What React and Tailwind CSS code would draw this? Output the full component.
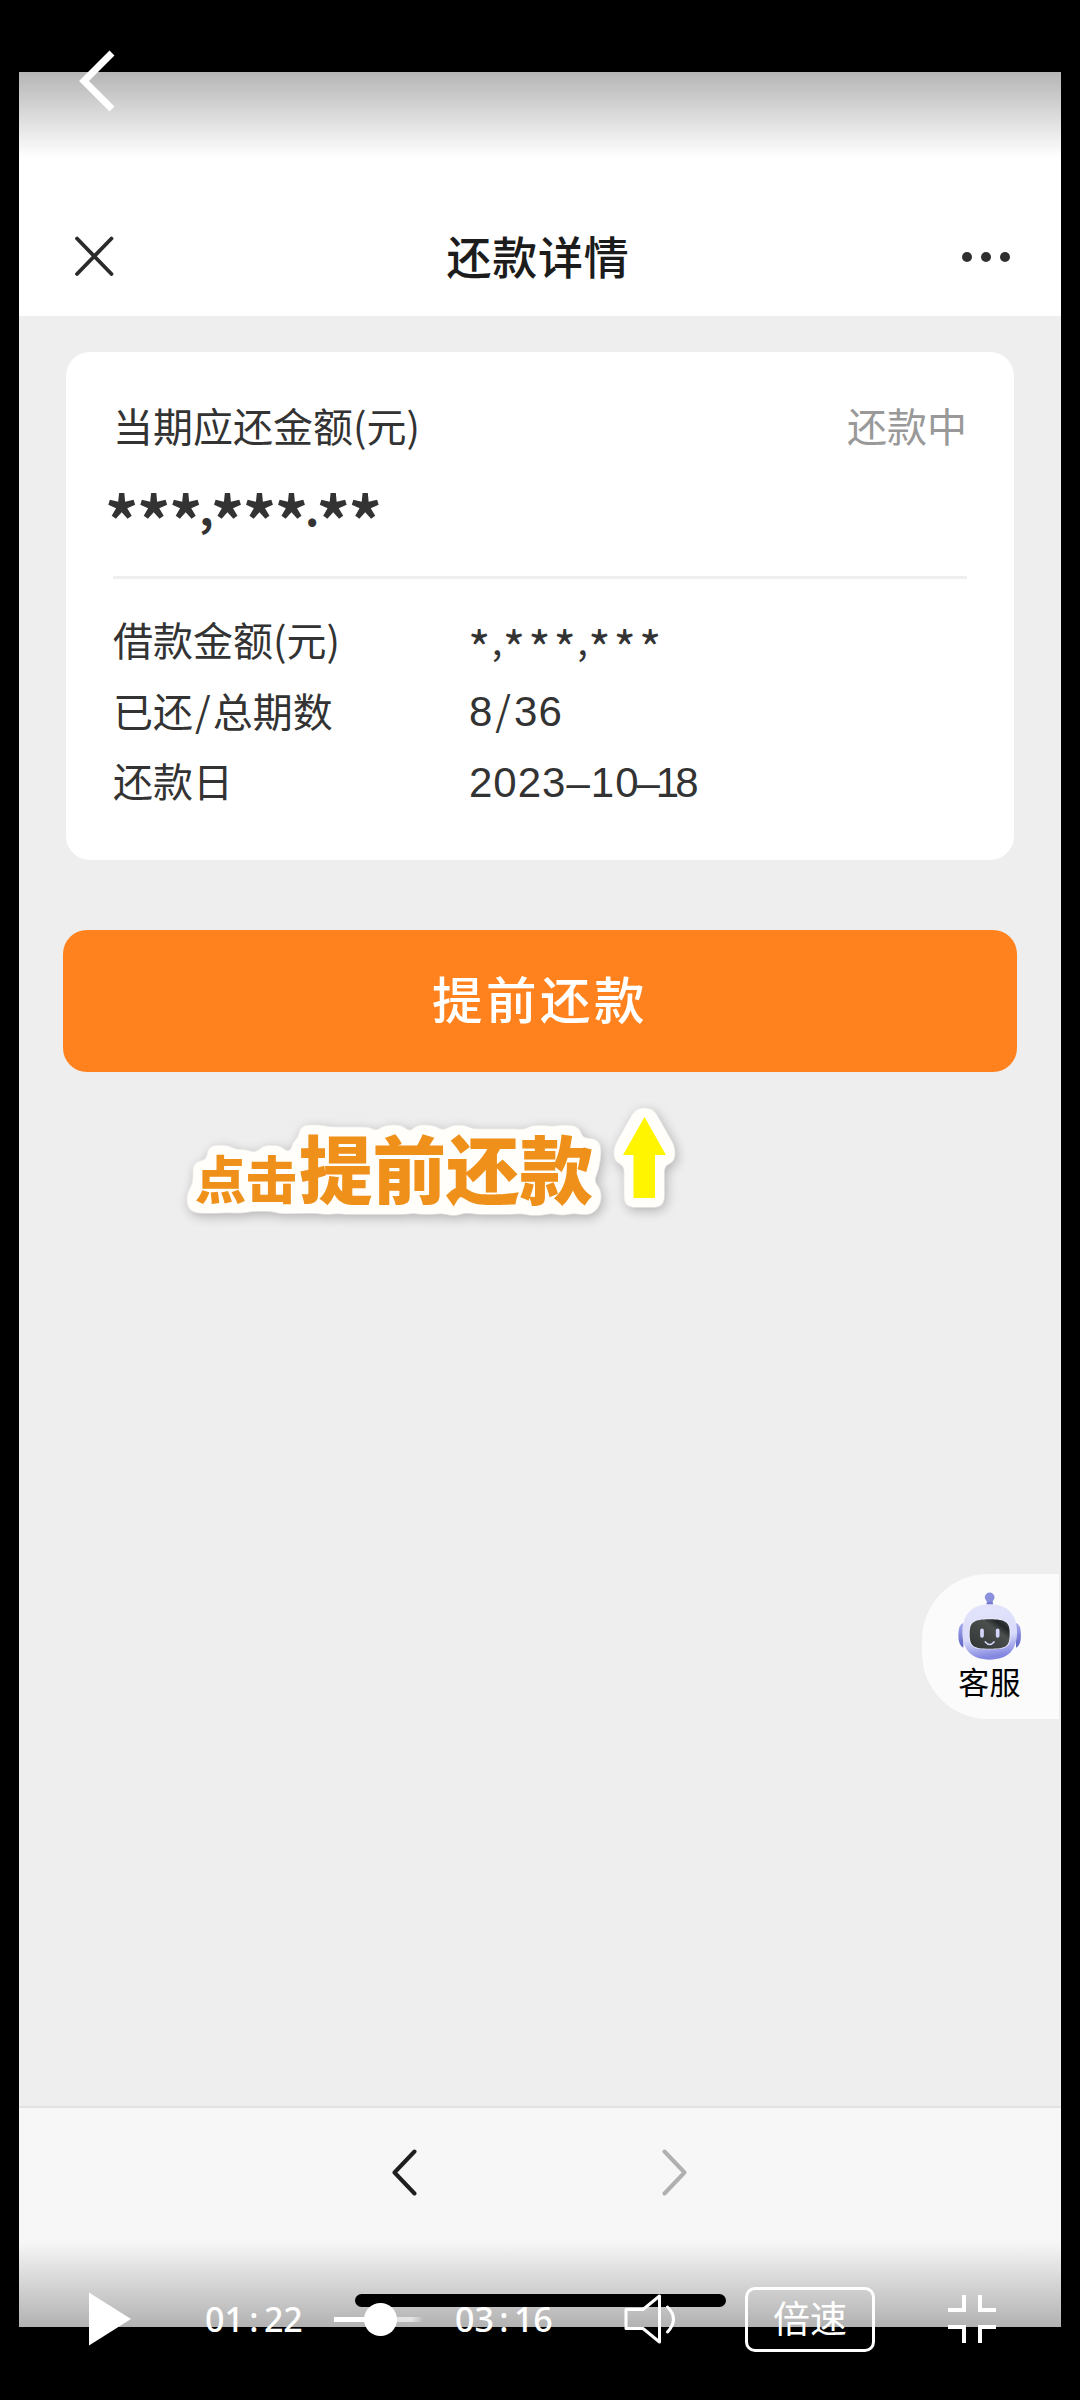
import React from 'react';

const maskStyles = {
  lg: {
    wrap: 'flex h-[66px] items-start -ml-[8px] font-bold',
    star: 'mt-[13px] text-[66px] leading-[66px] tracking-[-1.4px]',
    mark: 'w-[9.5px] -indent-[2px] text-[44px] leading-[72px]',
  },
  sm: {
    wrap: 'flex h-[70px] items-start -ml-[1px]',
    star: 'mt-[7px] text-[48px] leading-[70px] tracking-[2.9px]',
    mark: 'w-[9.5px] -indent-[1.5px] text-[38px] leading-[70px]',
  },
};

function Masked({ groups, size }) {
  const s = maskStyles[size];
  return (
    <div className={s.wrap}>
      {groups.map((g, i) => (
        <span key={i} className={g.startsWith('*') ? s.star : s.mark}>
          {g}
        </span>
      ))}
    </div>
  );
}

const loanRows = [
  { label: '借款金额(元)', value: <Masked size="sm" groups={['*', ',', '***', ',', '***']} /> },
  {
    label: (
      <>
        已还<span className="pr-[2px] pl-[2px]">/</span>总期数
      </>
    ),
    value: (
      <>
        8<span className="px-[2px] font-['Noto_Sans_CJK_SC',sans-serif] text-[40px] leading-none">/</span>36
      </>
    ),
  },
  {
    label: '还款日',
    value: (
      <>
        2023–10<span className="-ml-[3px] tracking-[-4px]">–18</span>
      </>
    ),
  },
];

const Time = ({ minutes, seconds }) => (
  <span className="flex h-[40px] items-center font-['Noto_Sans','Open_Sans',sans-serif] text-[34px] leading-none font-medium">
    <span>{minutes}</span>
    <span className="w-5 text-center">:</span>
    <span>{seconds}</span>
  </span>
);

const NavBar = () => (
  <header className="flex h-[244px] items-end justify-between bg-white pr-[51px] pb-[37px] pl-[55px]">
    <svg className="mb-[3px] h-[40px] w-[40px]" viewBox="0 0 40 40" fill="none" stroke="#2b2b2b" strokeWidth="3.8" strokeLinecap="round">
      <path d="M3 2.500l34.500 35.500M37.500 2.500L3 38" />
    </svg>
    <h1 className="h-[46px] text-[45px] leading-[45px] font-medium tracking-[0.7px] text-[#1c1c1c]">还款详情</h1>
    <div className="mb-[17px] flex gap-[9px]">
      <i className="size-[10px] rounded-full bg-[#2f2f2f]" />
      <i className="size-[10px] rounded-full bg-[#2f2f2f]" />
      <i className="size-[10px] rounded-full bg-[#2f2f2f]" />
    </div>
  </header>
);

const LoanCard = () => (
  <section className="mx-[47px] mt-[36px] h-[508px] rounded-[24px] bg-white px-[47px] text-[#333]">
    <div className="flex justify-between pt-[43px] text-[40px] leading-[60px]">
      <span>当期应还金额(元)</span>
      <span className="text-[#999]">还款中</span>
    </div>
    <div className="mt-[16px]">
      <Masked size="lg" groups={['***', ',', '***', '.', '**']} />
    </div>
    <div className="mt-[39px] h-[3px] bg-[#efefef]" />
    <dl className="mt-[28px] text-[40px]">
      {loanRows.map((row, i) => (
        <div key={i} className="flex h-[70.5px] items-center">
          <dt className="w-[356px] pb-[6px]">{row.label}</dt>
          <dd className="pb-[6px] text-[42px] tracking-[1px]">
            {i === 0 ? row.value : <span className="font-['Liberation_Sans',sans-serif]">{row.value}</span>}
          </dd>
        </div>
      ))}
    </dl>
  </section>
);

// White sticker outline with a soft shadow behind it
const StickerFilter = () => (
  <svg className="absolute size-0">
    <filter id="sticker" x="-20%" y="-40%" width="140%" height="180%" colorInterpolationFilters="sRGB">
      <feMorphology in="SourceAlpha" operator="dilate" radius="7" />
      <feGaussianBlur stdDeviation="4" />
      <feComponentTransfer result="shape">
        <feFuncA type="linear" slope="8" intercept="-1.8" />
      </feComponentTransfer>
      <feFlood floodColor="#fffefb" />
      <feComposite in2="shape" operator="in" result="outline" />
      <feGaussianBlur in="shape" stdDeviation="6" />
      <feOffset dx="2" dy="3" />
      <feComponentTransfer result="shadow">
        <feFuncR type="linear" slope="0" />
        <feFuncG type="linear" slope="0" />
        <feFuncB type="linear" slope="0" />
        <feFuncA type="linear" slope="0.26" />
      </feComponentTransfer>
      <feMerge>
        <feMergeNode in="shadow" />
        <feMergeNode in="outline" />
        <feMergeNode in="SourceGraphic" />
      </feMerge>
    </filter>
  </svg>
);

const Hint = () => (
  <div className="relative mt-[38px] ml-[176px] flex h-[96px] items-end [filter:url(#sticker)]">
    <StickerFilter />
    <span className="text-[51px] leading-[58px] font-black text-[#ee9019]">点击</span>
    <span className="mb-[3px] ml-[2px] text-[73.500px] leading-[74px] font-black text-[#ee9019]">提前还款</span>
    <svg className="mb-[8px] ml-[30px] h-[81px] w-[43px]" viewBox="0 0 43 81">
      <path d="M21.500 0L43 38H32V81H10.500V38H0Z" fill="#fff500" />
    </svg>
  </div>
);

const Robot = () => (
  <svg className="h-[70px] w-[66.700px]" viewBox="230 125 200 210">
    <defs>
      <linearGradient id="head" x1="0" y1="0" x2="0.15" y2="1">
        <stop offset="0" stopColor="#e4e5fb" />
        <stop offset="0.65" stopColor="#d9dbfa" />
        <stop offset="1" stopColor="#8488e0" />
      </linearGradient>
      <linearGradient id="ear" x1="0" y1="0" x2="0" y2="1">
        <stop offset="0" stopColor="#a9adf0" />
        <stop offset="1" stopColor="#5c60c4" />
      </linearGradient>
      <linearGradient id="face" x1="0" y1="1" x2="1" y2="0">
        <stop offset="0" stopColor="#303433" />
        <stop offset="0.65" stopColor="#4b504e" />
        <stop offset="0.8" stopColor="#222628" />
        <stop offset="1" stopColor="#4a4e50" />
      </linearGradient>
    </defs>
    <path d="M324 150h15l4 28h-24z" fill="#7479cf" />
    <circle cx="331" cy="144" r="14.500" fill="#8b90dc" />
    <path d="M252 221q-15 4-15 36t15 38zM410 221q15 4 15 36t-15 38z" fill="url(#ear)" />
    <path d="M331 165c52 0 82 30 82 84 0 52-26 82-82 82s-82-30-82-82c0-54 30-84 82-84z" fill="url(#head)" />
    <path d="M331 207c52 0 63 10 63 46 0 40-10 47-63 47s-63-7-63-47c0-36 11-46 63-46z" fill="#e9eafc" />
    <path d="M331 210c49 0 60 9 60 43 0 38-9 45-60 45s-60-7-60-45c0-34 11-43 60-43z" fill="url(#face)" />
    <g stroke="#d3d5fb" strokeLinecap="round" fill="none">
      <path d="M308 243v17M355 243v17" strokeWidth="11" />
      <path d="M318 278q13 15 26 0" strokeWidth="5" />
    </g>
  </svg>
);

const ServiceBubble = () => (
  <div className="absolute top-[1502px] right-[2px] flex h-[145px] w-[137px] flex-col items-center rounded-l-[66px] bg-[#fbfbfb] pt-[17px] pr-[2px]">
    <Robot />
    <span className="-mt-[2px] text-[31px] leading-[44px] tracking-[0.3px] text-black">客服</span>
  </div>
);

const BrowserBar = () => (
  <footer className="absolute inset-x-0 bottom-0 flex h-[221px] justify-center border-t-2 border-[#e2e2e2] bg-[#f7f7f7]">
    <div className="mt-[40px] flex h-[50px] w-[296px] justify-between pr-px">
      <svg className="h-[50px] w-[26px]" viewBox="0 0 26 50" fill="none" stroke="#1f1f1f" strokeWidth="4" strokeLinecap="round" strokeLinejoin="round">
        <path d="M22.500 3.500L2.500 24.500 22.500 45.500" />
      </svg>
      <svg className="h-[50px] w-[26px]" viewBox="0 0 26 50" fill="none" stroke="#b0b0b0" strokeWidth="4" strokeLinecap="round" strokeLinejoin="round">
        <path d="M3.500 3.500L23.500 24.500 3.500 45.500" />
      </svg>
    </div>
    <div className="absolute bottom-[20px] left-[336px] h-[13.500px] w-[371px] rounded-full bg-black" />
  </footer>
);

const PlayerControls = () => (
  <div className="absolute top-[2279px] left-0 flex h-[80px] w-[1080px] items-center pl-[88px] text-white">
    <svg className="h-[54px] w-[43px]" viewBox="0 0 43 54">
      <path d="M1 0.500L43 27 1 53.500Z" fill="#fff" />
    </svg>
    <div className="ml-[74px] w-[101px]">
      <Time minutes="01" seconds="22" />
    </div>
    <div className="ml-[28px] flex w-[88px] items-center">
      <div className="h-[5px] w-[32px] bg-white" />
      <div className="-mx-px size-[33px] shrink-0 rounded-full bg-white" />
      <div className="h-[5px] w-[26px] bg-gradient-to-r from-white/60 from-60% to-white/10" />
    </div>
    <div className="ml-[33px] w-[101px]">
      <Time minutes="03" seconds="16" />
    </div>
    <svg className="ml-[68px] h-[50px] w-[54px]" viewBox="0 0 54 50" fill="none" stroke="#fff" strokeWidth="3" strokeLinejoin="round" strokeLinecap="round">
      <path d="M2 15.500h17L35.500 2v46L19 34.500H2zM43.500 13q12 12 0 25" />
    </svg>
    <button className="ml-[67px] h-[65px] w-[130px] rounded-[10px] border-[3.500px] border-white pb-[4px] text-[37px] leading-[54px]">倍速</button>
    <svg className="ml-[72px] h-[50px] w-[50px]" viewBox="0 0 50 50" fill="none" stroke="#fff" strokeWidth="4">
      <path d="M1 16h16V1M49 16H33V1M1 33h16v16M49 33H33v16" />
    </svg>
  </div>
);

export default function App() {
  return (
    <div className="relative h-[2400px] w-[1080px] overflow-hidden bg-black pt-[72px] pl-[19px] font-['Noto_Sans_CJK_SC',sans-serif]">
      <main className="relative h-[2255px] w-[1042px] overflow-hidden bg-[#eeeeee]">
        <NavBar />
        <LoanCard />
        <button className="mx-[44px] mt-[70px] block h-[142px] w-[954px] rounded-[24px] bg-[#ff821e] pb-[9px] text-[50.500px] leading-[120px] font-medium tracking-[3.500px] text-white">
          提前还款
        </button>
        <Hint />
        <ServiceBubble />
        <BrowserBar />
        <div className="absolute inset-x-0 top-0 h-[86px] bg-gradient-to-b from-black/29 to-transparent" />
        <div className="absolute inset-x-0 bottom-0 h-[86px] bg-gradient-to-t from-black/28 to-transparent" />
      </main>
      <svg className="absolute top-[48px] left-[78px] h-[66px] w-[40px]" viewBox="0 0 40 66" fill="none" stroke="#fff" strokeWidth="7">
        <path d="M34 5L6 33 34 61" />
      </svg>
      <PlayerControls />
    </div>
  );
}
